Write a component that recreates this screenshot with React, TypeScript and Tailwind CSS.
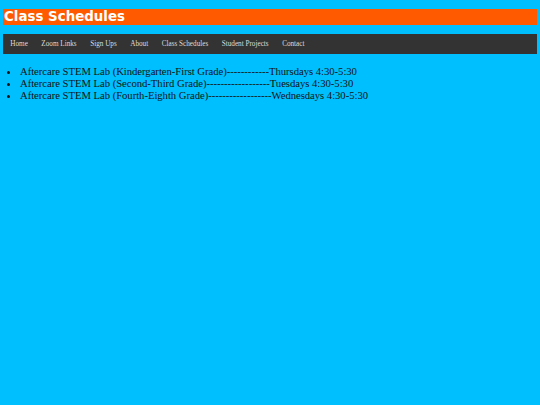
import React from "react";

export default function App() {
  const links = ["Home", "Zoom Links", "Sign Ups", "About", "Class Schedules", "Student Projects", "Contact"];
  const items = [
    "Aftercare STEM Lab (Kindergarten-First Grade)------------Thursdays 4:30-5:30",
    "Aftercare STEM Lab (Second-Third Grade)------------------Tuesdays 4:30-5:30",
    "Aftercare STEM Lab (Fourth-Eighth Grade)------------------Wednesdays 4:30-5:30",
  ];
  return (
    <div className="w-[540px] h-[405px] bg-[#00bfff] overflow-hidden pt-[9px] px-[3px]" style={{ fontFamily: '"Liberation Serif", serif' }}>
      <div className="h-[16px] bg-[#ff5a00] flex items-center pl-[1px]">
        <h1 className="text-white font-bold text-[13.4px] leading-[16px]" style={{ fontFamily: '"DejaVu Sans", sans-serif' }}>
          Class Schedules
        </h1>
      </div>
      <nav className="mt-[9px] h-[20px] bg-[#333333] flex items-center pl-[0.5px] pt-[1px]">
        {links.map((l) => (
          <span key={l} className="text-[#dddddd] text-[7.2px] px-[6.75px]">
            {l}
          </span>
        ))}
      </nav>
      <ul className="list-disc mt-[11px] pl-[17px] text-[10.67px] leading-[12px] text-[#111111] tracking-[-0.03px]">
        {items.map((t) => (
          <li key={t}>{t}</li>
        ))}
      </ul>
    </div>
  );
}
